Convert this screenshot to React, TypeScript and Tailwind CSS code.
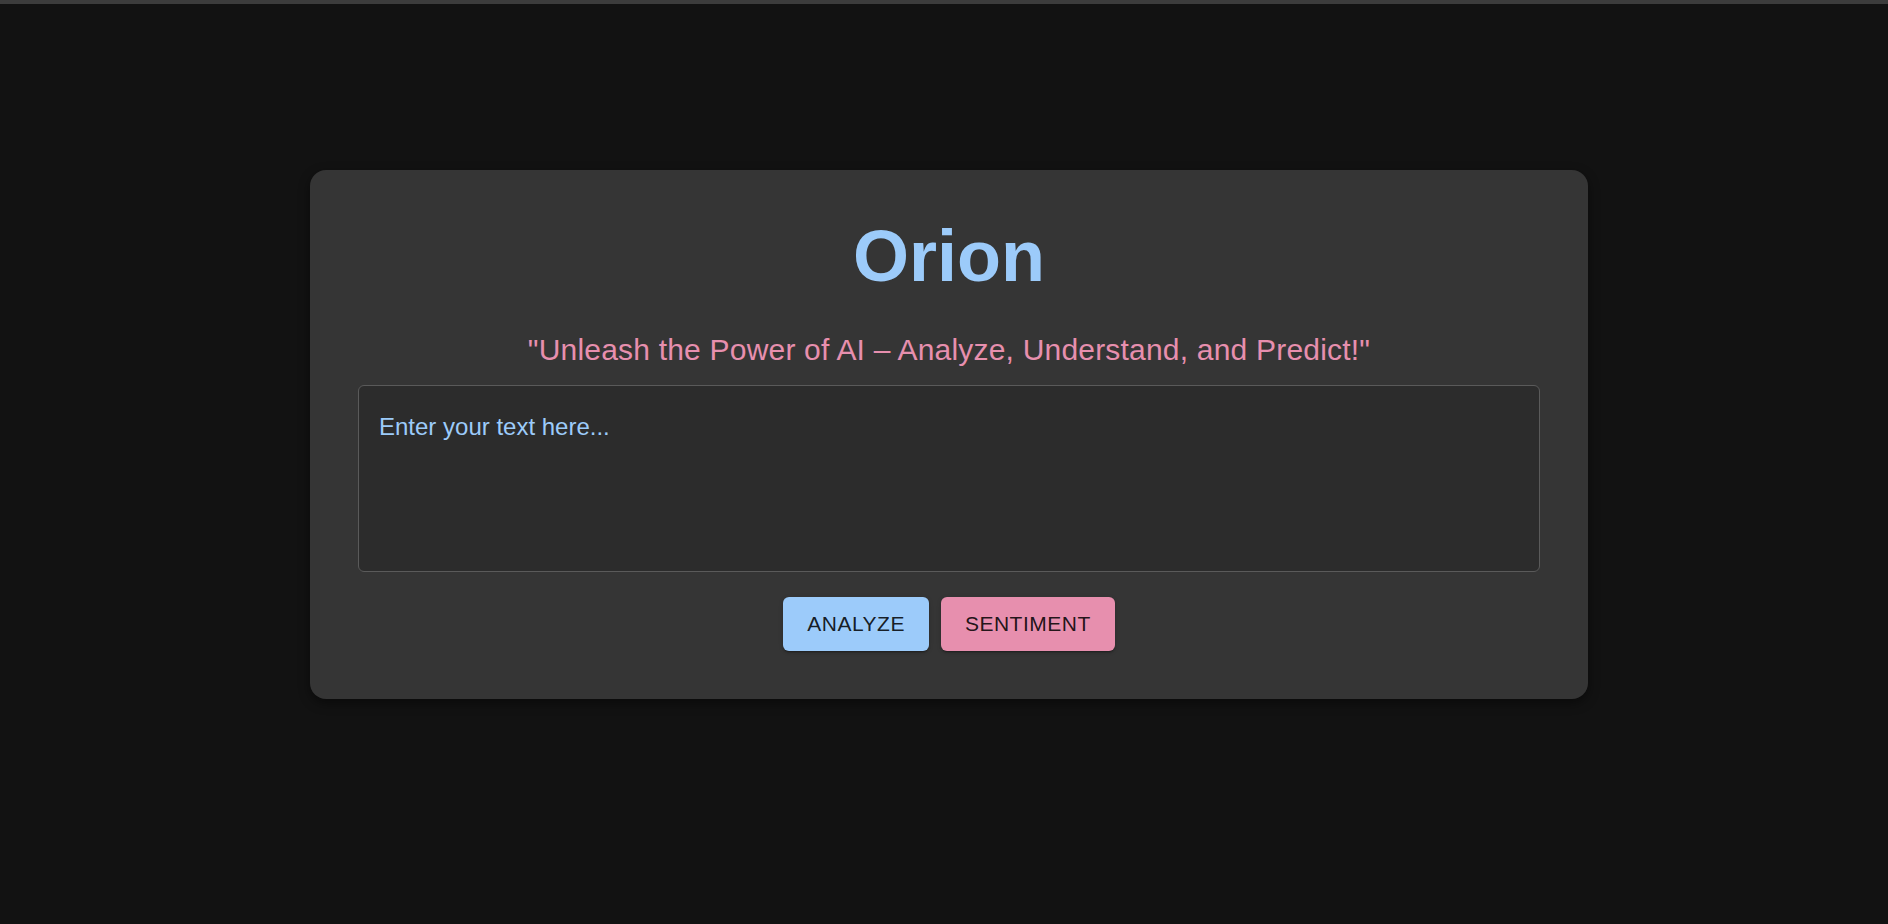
import React from "react";

export default function App() {
  return (
    <div
      className="min-h-screen w-full bg-[#121212]"
      style={{ fontFamily: '"Liberation Sans", Arial, Helvetica, sans-serif' }}
    >
      <div className="h-[4px] w-full bg-[#3c3c3c]" />
      <div className="flex justify-center pl-[10px] pt-[166px]">
        <div className="w-[1278px] rounded-[16px] bg-[#353535] p-[48px] shadow-[0_4px_12px_rgba(0,0,0,0.45)]">
          <h1 className="text-center text-[72px] font-bold leading-[76px] text-[#9ccbfa]">
            Orion
          </h1>
          <p className="mt-[32px] text-center text-[30px] leading-[48px] tracking-[0.2px] text-[#e78fae]">
            "Unleash the Power of AI – Analyze, Understand, and Predict!"
          </p>
          <textarea
            className="mt-[11px] block h-[187px] w-full resize-none rounded-[6px] border border-[#5a5a5a] bg-[#2c2c2c] px-[20px] py-[24px] text-[24px] leading-[34.5px] text-[#9ccbfa] outline-none placeholder:text-[#9ccbfa] placeholder:opacity-100"
            placeholder="Enter your text here..."
          />
          <div className="mt-[25px] flex justify-center gap-[12px]">
            <button className="h-[54px] rounded-[6px] bg-[#9ccbfa] px-[24px] text-[21px] uppercase tracking-[0.5px] text-[rgba(0,0,0,0.87)] shadow-[0_3px_1px_-2px_rgba(0,0,0,0.2),0_2px_2px_0_rgba(0,0,0,0.14),0_1px_5px_0_rgba(0,0,0,0.12)]">
              Analyze
            </button>
            <button className="h-[54px] rounded-[6px] bg-[#e78fae] px-[24px] text-[21px] uppercase tracking-[0.5px] text-[rgba(0,0,0,0.87)] shadow-[0_3px_1px_-2px_rgba(0,0,0,0.2),0_2px_2px_0_rgba(0,0,0,0.14),0_1px_5px_0_rgba(0,0,0,0.12)]">
              Sentiment
            </button>
          </div>
        </div>
      </div>
    </div>
  );
}
